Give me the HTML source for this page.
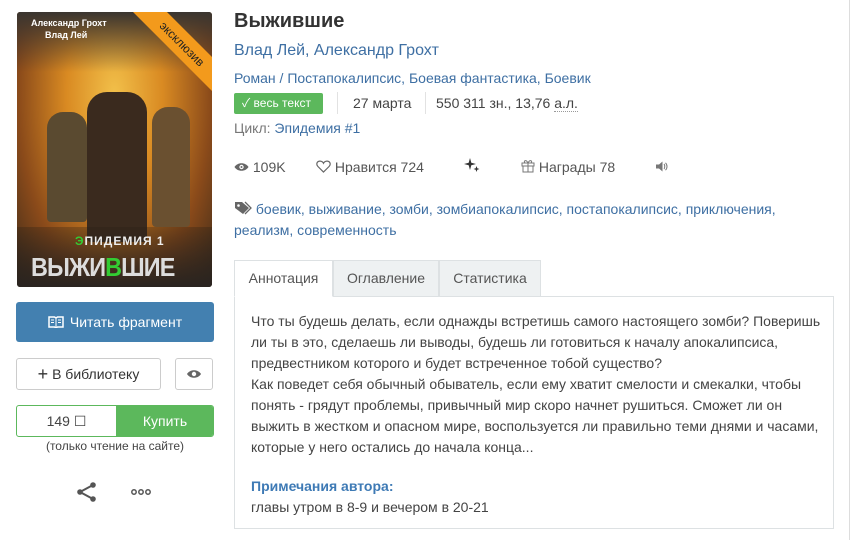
<!DOCTYPE html>
<html><head><meta charset="utf-8"><style>
*{box-sizing:border-box;margin:0;padding:0}
body{width:850px;height:540px;overflow:hidden;background:#fff;font-family:"Liberation Sans","Noto Sans CJK SC",sans-serif;color:#444;position:relative;font-size:14px}
.a{position:absolute}
.blue{color:#3e6fa3}
.cover{left:17px;top:12px;width:195px;height:275px;border-radius:3px;overflow:hidden;
background:radial-gradient(ellipse at 50% 30%,#f2c04a 0%,#d98a22 35%,#8a4a1a 70%,#3a2a1a 100%)}
.btn{border:1px solid #ccc;border-radius:3px;background:#fff}
.tab{top:260px;height:37px;border:1px solid #dde1e3;background:#eef1f2;font-size:14px;color:#555;text-align:center;line-height:35px}
</style></head><body>
<div class="a cover">
 <div class="a" style="left:0;top:0;width:195px;height:60px;background:linear-gradient(#3a3530,rgba(60,50,40,0))"></div>
 <div class="a" style="left:14px;top:6px;font-size:9px;font-weight:bold;color:#fff">Александр Грохт</div>
 <div class="a" style="left:28px;top:18px;font-size:9px;font-weight:bold;color:#fff">Влад Лей</div>
 <div class="a" style="left:70px;top:80px;width:60px;height:150px;background:#3a2a1e;border-radius:20px 20px 4px 4px"></div>
 <div class="a" style="left:30px;top:100px;width:40px;height:110px;background:#5a4a30;border-radius:16px 16px 4px 4px"></div>
 <div class="a" style="left:135px;top:95px;width:38px;height:120px;background:#6a5030;border-radius:16px 16px 4px 4px"></div>
 <div class="a" style="left:0;top:215px;width:195px;height:60px;background:linear-gradient(rgba(40,30,20,.3),#2a2420)"></div>
 <div class="a" style="left:58px;top:222px;font-size:12px;font-weight:bold;color:#eee;letter-spacing:1px"><span style="color:#3c3">Э</span>ПИДЕМИЯ 1</div>
 <div class="a" style="left:14px;top:240px;font-size:26px;font-weight:bold;color:#ddd;letter-spacing:-1px;transform:scaleX(0.9);transform-origin:0 0">ВЫЖИ<span style="color:#3c3">В</span>ШИЕ</div>
 <div class="a" style="left:105px;top:20px;width:120px;height:24px;background:#f39a1c;transform:rotate(45deg);font-size:12px;color:#222;text-align:center;line-height:24px">эксклюзив</div>
</div>

<div class="a" style="left:16px;top:302px;width:198px;height:40px;background:#4380b0;border-radius:3px;color:#fff;font-size:14px;line-height:40px;text-align:center">
<svg width="16" height="12" viewBox="0 0 16 12" style="vertical-align:-1px;margin-right:6px"><path d="M1 1h5.5l1.5 1 1.5-1H15v10H9.5L8 12l-1.5-1H1z" fill="none" stroke="#fff" stroke-width="1.5"/><path d="M8 2v9M3 4h3M3 6.5h3M10 4h3M10 6.5h3" stroke="#fff"/></svg>Читать фрагмент</div>
<div class="a btn" style="left:16px;top:358px;width:145px;height:32px;line-height:30px;text-align:center;color:#333;font-size:14px"><span style="font-size:18px;vertical-align:-1px">+</span> В библиотеку</div>
<div class="a btn" style="left:175px;top:358px;width:38px;height:32px;text-align:center;line-height:30px">
<svg width="14" height="10" viewBox="0 0 14 10"><path d="M0 5C3 0 11 0 14 5 11 10 3 10 0 5z" fill="#666"/><circle cx="7" cy="5" r="2.2" fill="#fff"/></svg></div>
<div class="a" style="left:16px;top:405px;width:198px;height:32px;border:1px solid #5cb85c;border-radius:3px;overflow:hidden">
 <div class="a" style="left:0;top:0;width:99px;height:30px;line-height:30px;text-align:center;color:#444">149 ☐</div>
 <div class="a" style="left:99px;top:0;width:98px;height:30px;background:#5cb85c;color:#fff;line-height:30px;text-align:center;font-size:14px">Купить</div>
</div>
<div class="a" style="left:16px;top:439px;width:198px;text-align:center;font-size:12px;color:#444">(только чтение на сайте)</div>
<svg class="a" style="left:76px;top:482px" width="22" height="20" viewBox="0 0 22 20"><circle cx="17" cy="3" r="2.8" fill="#555"/><circle cx="4" cy="10" r="2.8" fill="#555"/><circle cx="17" cy="17" r="2.8" fill="#555"/><path d="M17 3L4 10l13 7" stroke="#555" stroke-width="2" fill="none"/></svg>
<svg class="a" style="left:131px;top:489px" width="20" height="6" viewBox="0 0 20 6"><circle cx="3" cy="3" r="2.2" fill="none" stroke="#555" stroke-width="1.5"/><circle cx="10" cy="3" r="2.2" fill="none" stroke="#555" stroke-width="1.5"/><circle cx="17" cy="3" r="2.2" fill="none" stroke="#555" stroke-width="1.5"/></svg>

<div class="a" style="left:234px;top:10px;font-size:20px;font-weight:bold;color:#333">Выжившие</div>
<div class="a blue" style="left:234px;top:42px;font-size:16px">Влад Лей, Александр Грохт</div>
<div class="a blue" style="left:234px;top:70px;font-size:14px">Роман / Постапокалипсис, Боевая фантастика, Боевик</div>
<div class="a" style="left:234px;top:93px;width:89px;height:21px;background:#5cb85c;border-radius:2px;color:#fff;font-size:12px;line-height:21px;padding-left:8px">✓ весь текст</div>
<div class="a" style="left:337px;top:92px;width:1px;height:22px;background:#e2e2e2"></div>
<div class="a" style="left:353px;top:95px;font-size:14px">27 марта</div>
<div class="a" style="left:425px;top:92px;width:1px;height:22px;background:#e2e2e2"></div>
<div class="a" style="left:436px;top:95px;font-size:14px">550 311 зн., 13,76 <span style="border-bottom:1px dotted #999">а.л.</span></div>
<div class="a" style="left:234px;top:120px;font-size:14px;color:#777">Цикл: <span class="blue">Эпидемия #1</span></div>

<div class="a" style="left:234px;top:159px;font-size:14px;color:#555">
<svg width="15" height="10" viewBox="0 0 14 10" style="vertical-align:0"><path d="M0 5C3 0 11 0 14 5 11 10 3 10 0 5z" fill="#666"/><circle cx="7" cy="5" r="2.2" fill="#fff"/><circle cx="7" cy="5" r="1" fill="#666"/></svg> 109K</div>
<div class="a" style="left:316px;top:159px;font-size:14px;color:#555">
<svg width="15" height="13" viewBox="0 0 16 14" style="vertical-align:-1px"><path d="M8 13L2 7C0 5 0.5 1.5 4 1.2 6 1 7.5 2.5 8 3.5 8.5 2.5 10 1 12 1.2 15.5 1.5 16 5 14 7z" fill="none" stroke="#666" stroke-width="1.3"/></svg> Нравится 724</div>
<svg class="a" style="left:464px;top:157px" width="16" height="16" viewBox="0 0 16 16"><path d="M6 1L7.3 5.7 12 7 7.3 8.3 6 13 4.7 8.3 0 7 4.7 5.7z" fill="#333"/><path d="M12.5 9l.8 2.2 2.2.8-2.2.8-.8 2.2-.8-2.2-2.2-.8 2.2-.8z" fill="#333"/></svg>
<div class="a" style="left:521px;top:159px;font-size:14px;color:#555">
<svg width="14" height="14" viewBox="0 0 14 14" style="vertical-align:-1px"><path d="M1 4h12v3H1zM2 7h10v6H2zM7 4v9M7 4C5 0 2 2 4 4M7 4C9 0 12 2 10 4" fill="none" stroke="#777"/></svg> Награды 78</div>
<svg class="a" style="left:656px;top:161px" width="12" height="11" viewBox="0 0 12 11"><path d="M0 3.5h3L6.5 0.5v10L3 7.5H0z" fill="#777"/><path d="M8 3c1 1 1 4 0 5M9.5 1.8c2 2 2 5.4 0 7.4" fill="none" stroke="#777" stroke-width="1"/></svg>

<div class="a" style="left:234px;top:199px;font-size:14px;line-height:21px;width:560px" >
<svg width="18" height="14" viewBox="0 0 18 14" style="vertical-align:-1px"><path d="M1 1h7l7 6-6 6-8-6z" fill="#666"/><circle cx="4.5" cy="4.5" r="1.3" fill="#fff"/><path d="M11 1l6 6-6 6" fill="none" stroke="#666" stroke-width="1.3"/></svg>
<span class="blue">боевик, выживание, зомби, зомбиапокалипсис, постапокалипсис, приключения, реализм, современность</span></div>

<div class="a" style="left:234px;top:296px;width:600px;height:233px;border:1px solid #dde1e3"></div>
<div class="a tab" style="left:234px;width:99px;background:#fff;border-bottom-color:#fff">Аннотация</div>
<div class="a tab" style="left:333px;width:106px">Оглавление</div>
<div class="a tab" style="left:439px;width:102px">Статистика</div>
<div class="a" style="left:251px;top:311px;width:575px;font-size:14px;line-height:21px;color:#444">Что ты будешь делать, если однажды встретишь самого настоящего зомби? Поверишь ли ты в это, сделаешь ли выводы, будешь ли готовиться к началу апокалипсиса, предвестником которого и будет встреченное тобой существо?<br>Как поведет себя обычный обыватель, если ему хватит смелости и смекалки, чтобы понять - грядут проблемы, привычный мир скоро начнет рушиться. Сможет ли он выжить в жестком и опасном мире, воспользуется ли правильно теми днями и часами, которые у него остались до начала конца...</div>
<div class="a" style="left:251px;top:478px;font-size:14px;font-weight:bold;color:#3e7ab5">Примечания автора:</div>
<div class="a" style="left:251px;top:499px;font-size:14px">главы утром в 8-9 и вечером в 20-21</div>
<div class="a" style="left:849px;top:0;width:1px;height:540px;background:#ddd"></div>
</body></html>
